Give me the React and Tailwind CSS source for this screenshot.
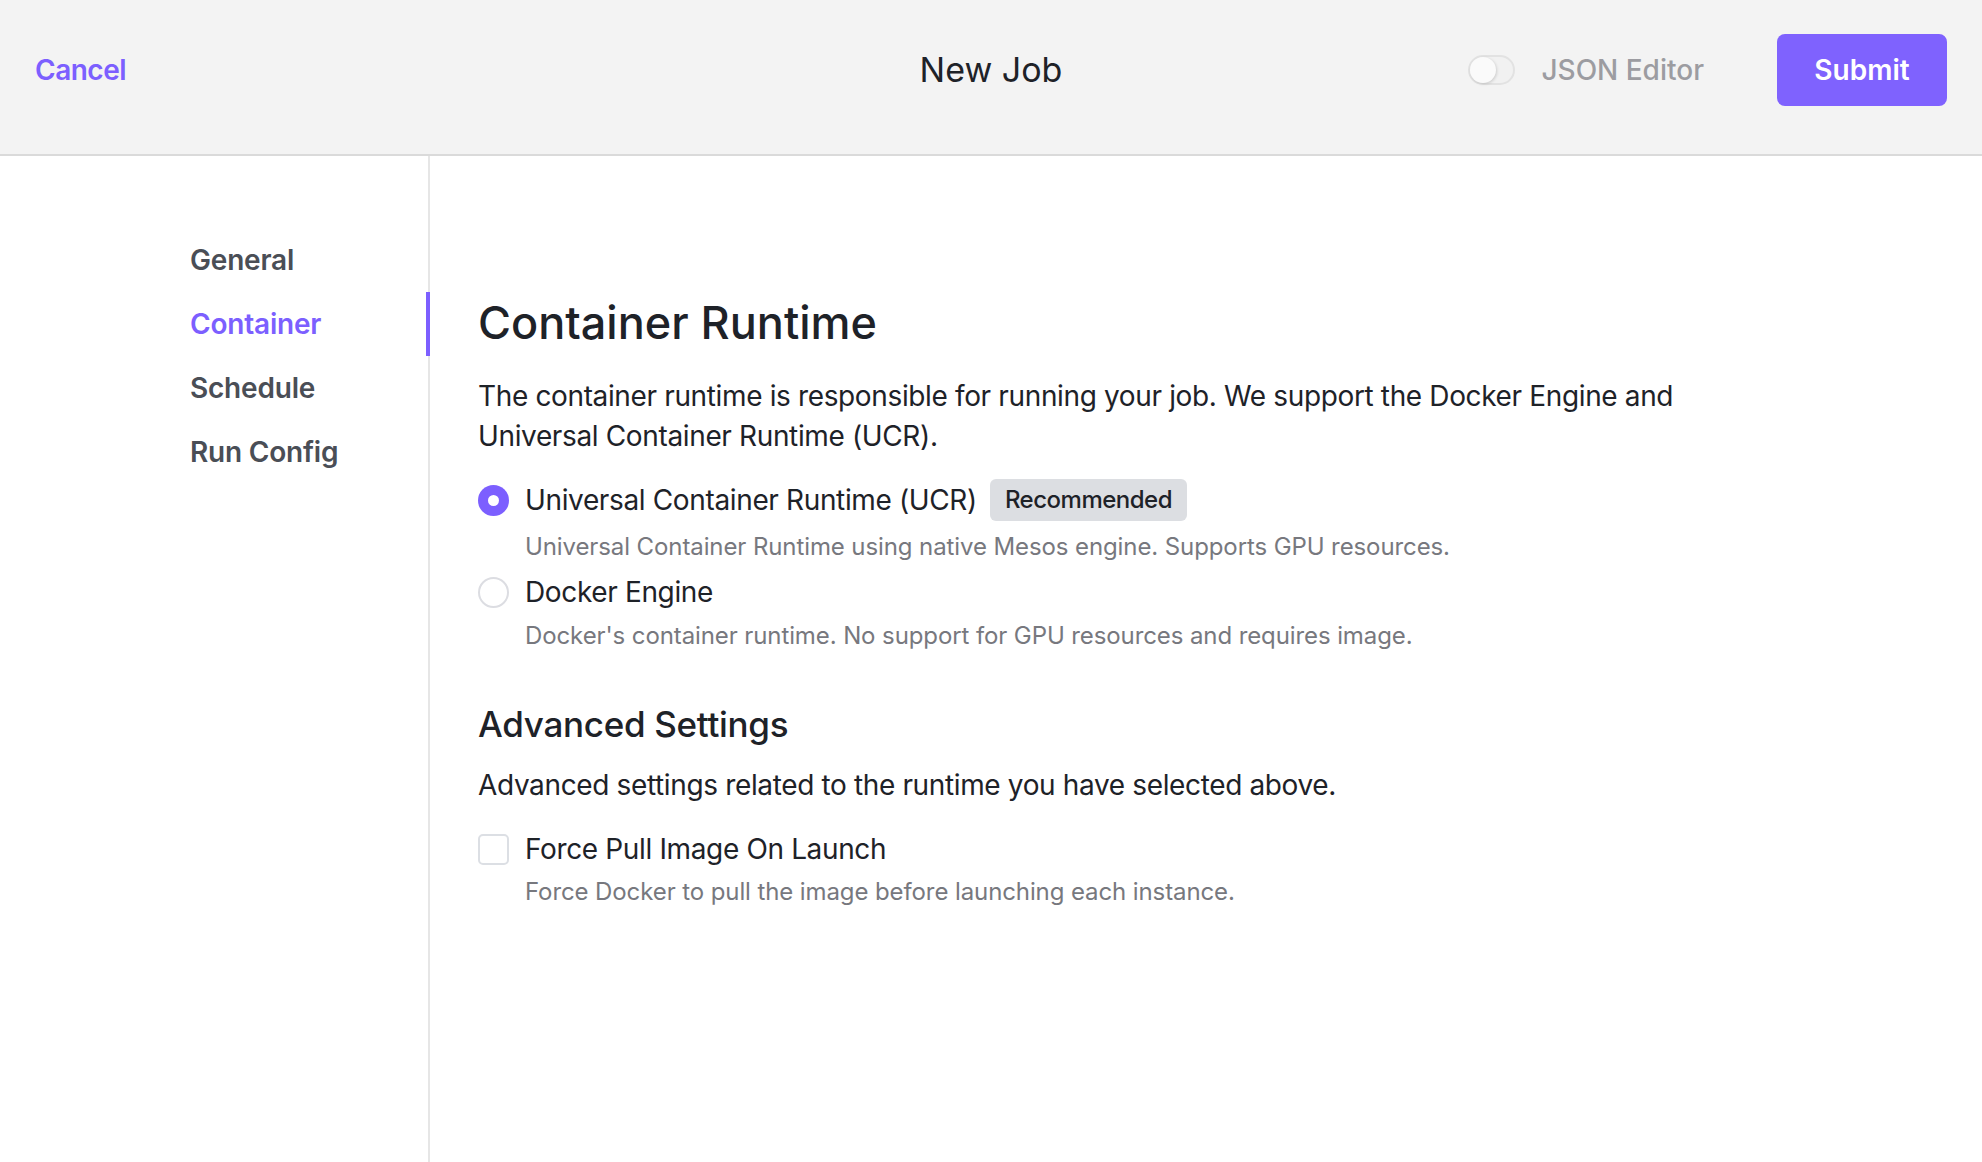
const purple = 'text-[#7c5fff]';

function Toggle() {
  return (
    <div className="w-[47px] h-[30px] rounded-full border-2 border-[#e2e2e2] bg-[#f1f1f1] flex items-center">
      <div className="w-[26px] h-[26px] rounded-full bg-[#fafafa] shadow-[1px_1px_3px_rgba(0,0,0,0.15)]" />
    </div>
  );
}

function Radio({ checked }) {
  return checked ? (
    <span className="w-[31px] h-[31px] rounded-full bg-[#7c5fff] flex items-center justify-center shrink-0">
      <span className="w-[11px] h-[11px] rounded-full bg-white" />
    </span>
  ) : (
    <span className="w-[31px] h-[31px] rounded-full border-2 border-[#dcdde2] bg-white shrink-0" />
  );
}

const nav = ['General', 'Container', 'Schedule', 'Run Config'];

export default function App() {
  return (
    <div className="min-h-screen bg-white flex flex-col font-['Inter',sans-serif] text-[#1e2228]">
      {/* header */}
      <header className="h-[156px] bg-[#f3f3f3] border-b-2 border-[#dadada] grid grid-cols-3 items-center px-[35px] pb-[14px] shrink-0">
        <div>
          <button className={`text-[28px] font-semibold tracking-[-0.5px] ${purple}`}>Cancel</button>
        </div>
        <div className="flex justify-center">
          <h1 className="text-[34px] leading-none">New Job</h1>
        </div>
        <div className="flex items-center justify-end">
          <Toggle />
          <span className="ml-[26px] text-[28px] font-medium text-[#9c9ca1]">JSON Editor</span>
          <button className="ml-[73px] w-[170px] h-[72px] rounded-[8px] bg-[#7f62fe] text-white text-[28px] font-semibold">
            Submit
          </button>
        </div>
      </header>

      <div className="flex flex-1">
        {/* sidebar */}
        <aside className="w-[430px] border-r-2 border-[#e6e6e6] pt-[72px] shrink-0">
          {nav.map((item) => {
            const active = item === 'Container';
            return (
              <div key={item} className="relative h-[64px] flex items-center pl-[190px]">
                <span className={`text-[28px] font-semibold tracking-[-0.2px] ${active ? purple : 'text-[#4a4e56]'}`}>
                  {item}
                </span>
                {active && <span className="absolute top-0 bottom-0 right-[-2px] w-[4px] bg-[#7c5fff]" />}
              </div>
            );
          })}
        </aside>

        {/* content */}
        <main className="pl-[48px] pt-[139px] max-w-[1290px] tracking-[-0.36px]">
          <h2 className="text-[45px] leading-[56px] font-medium tracking-normal">Container Runtime</h2>
          <p className="mt-[25px] text-[28px] leading-[40px]">
            The container runtime is responsible for running your job. We support the Docker Engine and Universal
            Container Runtime (UCR).
          </p>

          <div className="mt-[23px] h-[42px] flex items-center">
            <Radio checked />
            <span className="ml-[16px] text-[28px]">Universal Container Runtime (UCR)</span>
            <span className="ml-[13px] h-[42px] px-[15px] rounded-[6px] bg-[#dcdee2] text-[24px] font-medium tracking-[-0.5px] flex items-center">
              Recommended
            </span>
          </div>
          <p className="mt-[10px] ml-[47px] text-[24px] leading-[32px] tracking-[-0.1px] text-[#77787e]">
            Universal Container Runtime using native Mesos engine. Supports GPU resources.
          </p>

          <div className="mt-[8px] h-[42px] flex items-center">
            <Radio />
            <span className="ml-[16px] text-[28px]">Docker Engine</span>
          </div>
          <p className="mt-[7px] ml-[47px] text-[24px] leading-[32px] tracking-[-0.1px] text-[#77787e]">
            Docker's container runtime. No support for GPU resources and requires image.
          </p>

          <h3 className="mt-[48px] text-[35px] leading-[48px] font-medium tracking-[-0.3px]">Advanced Settings</h3>
          <p className="mt-[17px] text-[28px] leading-[40px]">
            Advanced settings related to the runtime you have selected above.
          </p>

          <label className="mt-[24px] h-[40px] flex items-center">
            <span className="w-[31px] h-[31px] rounded-[5px] border-2 border-[#dcdfe4] bg-white shrink-0" />
            <span className="ml-[16px] text-[28px]">Force Pull Image On Launch</span>
          </label>
          <p className="mt-[7px] ml-[47px] text-[24px] leading-[32px] tracking-[-0.1px] text-[#77787e]">
            Force Docker to pull the image before launching each instance.
          </p>
        </main>
      </div>
    </div>
  );
}
